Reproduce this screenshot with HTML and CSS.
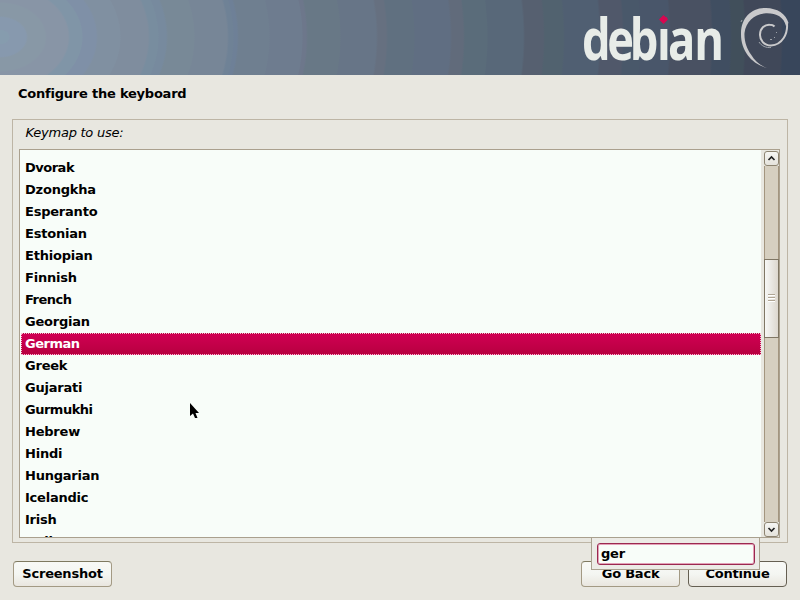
FILE: index.html
```
<!DOCTYPE html>
<html lang="en">
<head>
<meta charset="utf-8">
<title>Configure the keyboard</title>
<link rel="stylesheet" href="styles.css">
</head>
<body>
<header class="banner">
  <svg class="logo" width="220" height="75" viewBox="580 0 220 75">
    <defs>
      <mask id="nodot" maskUnits="userSpaceOnUse" x="580" y="0" width="220" height="75"><rect x="580" y="0" width="220" height="75" fill="#fff"/><rect x="658" y="8" width="11" height="18" fill="#000"/></mask>
    </defs>
    <g mask="url(#nodot)"><text class="wordmark" transform="scale(.78 1)" y="60" x="746.200 778.500 807.500 842.300 856.500 890.200">debian</text></g>
    <path d="M663.500 15L665.500 17H666.500L668 19.500L665.500 22L663.500 24L661.500 22L659 19.500L661.500 17Z" fill="#d70751"/>
    <g fill="#c9c9cb">
      <path d="M767 68C753 64.500 740.500 52 741 33C741.500 17 752 7.700 766 8C777 8.300 786 13.500 788.500 23L786 26C784 17 776 13 766 13.300C755 13.700 746 21 744.500 33C744 41 747 49 751 54.500C755 61 760 65.500 767 68Z"/>
      <path d="M786.800 22C788.500 34 782 45 771 45.500C764 45.500 759.800 40 760 34.500C760.200 28 765 24.500 769.500 24.700C772 24.700 773.500 25.300 774.500 26.500" fill="none" stroke="#c9c9cb" stroke-width="2"/>
      <path d="M741 22l1-2M759 42C761.500 46 766 48 771 47.500" stroke="#9da2a9" fill="none"/>
      <path d="M776 32h1v1h-1zM774 37h1v1h-1zM770 39h2v1h-2z" fill="#9da2a9"/>
    </g>
  </svg>
</header>
<h1 class="title">Configure the keyboard</h1>
<main class="frame">
  <p class="prompt">Keymap to use:</p>
  <div class="listbox">
    <ul class="list">
      <li class="tight">Dvorak</li><li>Dzongkha</li><li>Esperanto</li><li>Estonian</li><li>Ethiopian</li><li>Finnish</li><li class="tight">French</li><li>Georgian</li><li class="selected tight">German</li><li>Greek</li><li>Gujarati</li><li class="tight">Gurmukhi</li><li>Hebrew</li><li>Hindi</li><li>Hungarian</li><li>Icelandic</li><li>Irish</li><li>Italian</li>
    </ul>
    <div class="scrollbar">
      <div class="step"><svg width="13" height="13"><path d="M3.500 8L6.500 5L9.500 8" /></svg></div>
      <div class="track"><div class="thumb"><i></i><i></i><i></i></div></div>
      <div class="step"><svg width="13" height="13"><path d="M3.500 5L6.500 8L9.500 5" /></svg></div>
    </div>
  </div>
</main>
<footer class="actions">
  <button class="btn shot">Screenshot</button>
  <button class="btn">Go Back</button>
  <button class="btn default">Continue</button>
</footer>
<div class="search"><div class="entry">ger</div></div>
<svg class="pointer" width="10" height="16" viewBox="0 0 10 16"><path d="M0 0V13L3 10.500L5 15H7.500L5.500 10H9Z"/></svg>
</body>
</html>
```
FILE: styles.css
```
* { box-sizing: border-box; }
body {
  margin: 0;
  width: 800px;
  height: 600px;
  overflow: hidden;
  position: relative;
  display: flex;
  flex-direction: column;
  background: #e8e7e0;
  color: #000;
  font: bold 13px/22px "DejaVu Sans", sans-serif;
  letter-spacing: -0.22px;
}
.banner {
  height: 75px;
  flex: none;
  display: flex;
  justify-content: flex-end;
  background: radial-gradient(ellipse 800px 600px at 0 37px,
    #869cae 0 9px, #8799ae 10px 26px, #8898a6 28px 45px, #8895a6 47px 68px,
    #8095a7 70px 82px, #7f90a7 83px 96px, #8090a1 98px 120px, #7f8d9e 121px 148px,
    #788d9f 150px 158px, #778a9e 159px 166px, #788997 168px 194px, #778697 195px 227px,
    #6f8296 229px 233px, #6e8097 234px 237px, #6f7f90 239px 269px, #6e7c8f 270px 302px,
    #6d778b 303px 306px, #687886 308px 340px, #677587 341px 376px, #667080 378px 386px,
    #607080 388px 414px, #606e82 415px 450px, #616b7b 452px 463px, #5a6c7a 465px 487px,
    #586879 488px 523px, #566070 525px 543px, #51626f 545px 563px, #505f72 565px 599px,
    #50586a 601px 622px, #49586a 624px 640px, #49566a 641px 669px, #495162 671px 711px,
    #404e61 713px 730px, #414f5b 732px 744px, #404859 746px 781px, #38465b 783px);
}
.wordmark { font: bold 58px "Open Sans", sans-serif; letter-spacing: 0; fill: #e8ece8; }
.title { margin: 8px 0 0 18px; font-size: 13px; line-height: 22px; }
.frame {
  margin: 14px 12px 0;
  height: 424px;
  flex: none;
  border: 1px solid #bdb5a5;
  padding: 2px 7px 4px 6px;
}
.prompt { margin: 0 0 6px 6.5px; font: italic 13px/21px "DejaVu Sans", sans-serif; letter-spacing: -0.25px; }
.listbox {
  height: 389px;
  display: flex;
  border: 1px solid #aaa08e;
  background: #e8e7e0;
}
.list {
  flex: 1;
  margin: 0;
  padding: 7px 0 0 1px;
  overflow: hidden;
  list-style: none;
  background: #f8fdf9;
}
.list li { height: 22px; padding-left: 4px; line-height: 21px; }
.list .tight { letter-spacing: -0.5px; }
.list .selected {
  color: #fff;
  line-height: 19px;
  padding-left: 3px;
  border: 1px dotted #f6bfd0;
  background: linear-gradient(#d00053, #b80040);
}
.scrollbar {
  width: 15px;
  margin: 1px 0 0 3px;
  display: flex;
  flex-direction: column;
}
.step {
  height: 15px;
  border: 1px solid #8d8471;
  border-radius: 3px;
  background: linear-gradient(#f6f6f3, #e5e3dc);
}
.step svg { display: block; }
.step path { fill: none; stroke: #222; stroke-width: 1.7; }
.track {
  flex: 1;
  padding-top: 93px;
  border: solid #a3957f;
  border-width: 0 1px;
  background: #d6cfc0;
}
.thumb {
  height: 79px;
  margin: 0 -1px;
  padding-bottom: 3px;
  display: flex;
  flex-direction: column;
  align-items: center;
  justify-content: center;
  gap: 2px;
  border: 1px solid #7f7664;
  background: linear-gradient(90deg, #f7f7f5, #e5e2dc 65%, #ddd7ce);
}
.thumb i { width: 7px; height: 1px; background: #b0a594; box-shadow: 0 1px #fff; }
.actions { display: flex; gap: 8px; margin: 18px 13px 0; }
.btn {
  width: 99px;
  height: 26px;
  padding: 0;
  font: inherit;
  letter-spacing: inherit;
  line-height: 22px;
  border: 1px solid #a39a84;
  border-top-color: #7e7960;
  border-radius: 4px;
  background: linear-gradient(#f8f9f6, #f4f6f2 50%, #e9e6df);
  color: #000;
}
.shot { margin-right: auto; }
.default { border-color: #655f52; }
.search {
  position: absolute;
  left: 591px;
  top: 537px;
  width: 169px;
  height: 33px;
  padding: 5px 4px 5px 5px;
  border: 1px solid #a9a18f;
  background: #ecebe6;
}
.entry {
  height: 22px;
  padding-left: 3px;
  line-height: 20px;
  border: 1px solid #9b2850;
  border-radius: 3px;
  box-shadow: inset 0 0 0 1px #e3a1b7;
  background: #f8fdf9;
}
.pointer { position: absolute; left: 190px; top: 403px; }
```
